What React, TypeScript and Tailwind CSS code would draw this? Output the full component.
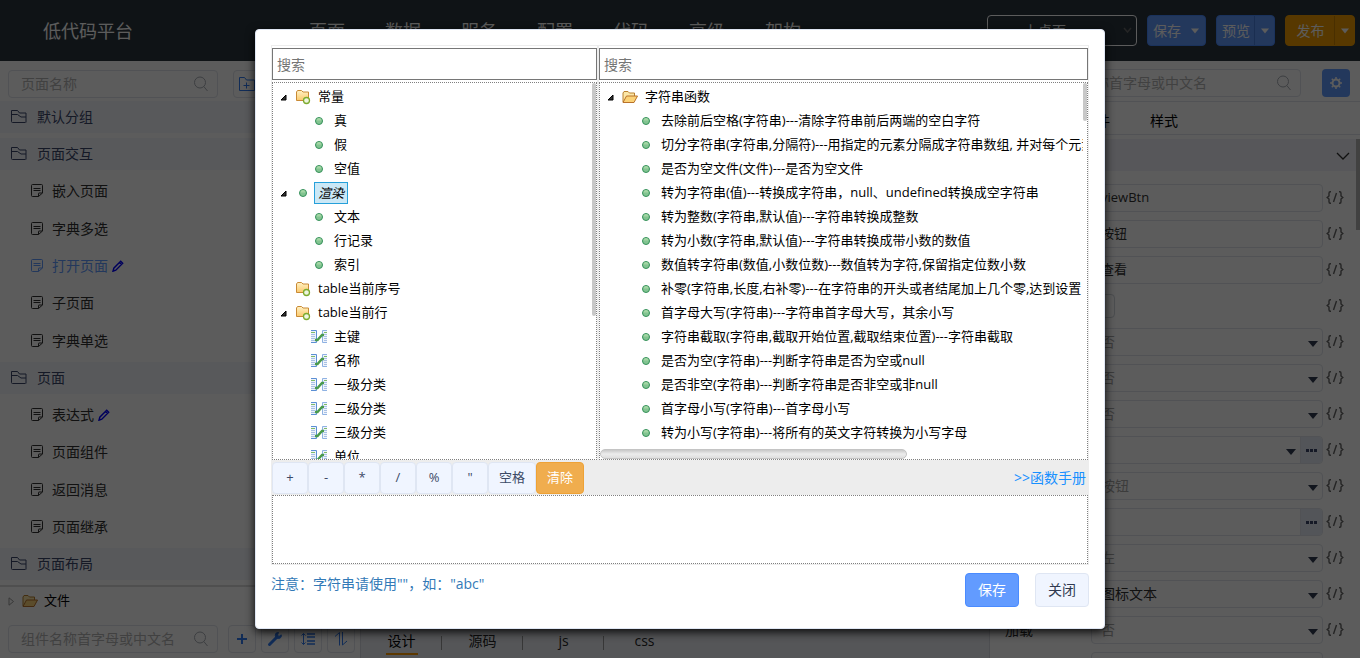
import React from "react";

function Triangle({ className = "" }: { className?: string }) {
  return (
    <svg className={`shrink-0 ${className}`} width="10" height="6" viewBox="0 0 10 6" fill="currentColor" aria-hidden="true">
      <path d="M0 0h10L5 6z" />
    </svg>
  );
}

function SearchIcon() {
  return (
    <svg className="shrink-0 text-[#a9adb5]" width="16" height="16" viewBox="0 0 16 16" fill="none" stroke="currentColor" aria-hidden="true">
      <circle cx="7" cy="6.5" r="5.5" />
      <path d="M10.8 10.5L14.5 15" />
    </svg>
  );
}

function OutlineFolder() {
  return (
    <svg className="shrink-0" width="18" height="14" viewBox="0 0 18 14" fill="none" stroke="currentColor" aria-hidden="true">
      <path d="M15.5 12.5h-13a1 1 0 0 1-1-1V.5h6l2 2.5h6.5v9.5M1.5 4.5h6l3.5 2.5h5" />
    </svg>
  );
}

function PageIcon() {
  return (
    <svg className="shrink-0" width="14" height="14" viewBox="0 0 14 14" fill="none" stroke="currentColor" aria-hidden="true">
      <path d="M12.5 9V1.5a1 1 0 0 0-1-1h-9a1 1 0 0 0-1 1v10a1 1 0 0 0 1 1H8.5zM8.5 12.5V9.500a.5.5 0 0 1 .5-.5h3.5M3.5 4.5h7M3.5 6.5h7" />
    </svg>
  );
}

function EditPen() {
  return (
    <svg className="shrink-0 text-[#0000ff]" width="12" height="12" viewBox="0 0 12 12" fill="none" stroke="currentColor" strokeWidth="1.4" aria-hidden="true">
      <path d="M1 11.200l.8-3L8.700 1.300l2 2L3.800 10.200zM7.500 2.500l2 2" />
    </svg>
  );
}

function OpenFolder() {
  return (
    <svg className="shrink-0" width="16" height="16" viewBox="0 0 16 16" aria-hidden="true">
      <path d="M1 13V4l1-1.500h4L7.500 4h5v3" fill="#fbe7a8" stroke="#b9802f" />
      <path d="M1 13.500L4.500 7h11L12 13.500z" fill="#fbd277" stroke="#b9722a" />
    </svg>
  );
}

function ClosedFolder() {
  return (
    <svg className="shrink-0" width="16" height="16" viewBox="0 0 16 16" aria-hidden="true">
      <defs>
        <linearGradient id="folderFill" x1="0" y1="0" x2="0" y2="1">
          <stop offset="0" stopColor="#fff2c4" />
          <stop offset="1" stopColor="#fbc96d" />
        </linearGradient>
      </defs>
      <path d="M1.500 11V3l1-1.500h4L8 3h5.500v8.500h-12z" fill="url(#folderFill)" stroke="#c98a35" />
      <circle cx="11.500" cy="11.500" r="3" fill="#eef5df" stroke="#7dab2f" strokeWidth="1.300" />
    </svg>
  );
}

function Dot() {
  return (
    <svg className="shrink-0" width="16" height="16" viewBox="0 0 16 16" aria-hidden="true">
      <circle cx="8" cy="8" r="3.500" fill="#82c491" stroke="#35915a" />
      <path d="M5.500 7.500a2.500 2.500 0 0 1 5 0z" fill="#a3d6a4" />
    </svg>
  );
}

function FieldIcon() {
  return (
    <svg className="shrink-0" width="16" height="16" viewBox="0 0 16 16" aria-hidden="true">
      <path d="M0 1.500h5.500v12H0" fill="#eef3fb" stroke="#5b8fd4" />
      <path d="M16 1.500h-4.500v12H16" fill="#eef3fb" stroke="#8fb2e3" />
      <path d="M0 5.500h4M0 7.500h4M0 9.500h4M0 11.500h4M13 5.500h3M13 7.500h3M13 9.500h3M13 11.500h3" stroke="#a9c1e4" />
      <path d="M0 3.500h4M13 3.500h3" stroke="#7dbb6a" />
      <path d="M4 11h2.500L11 6h2" fill="none" stroke="#4a9a4c" strokeWidth="2.400" />
    </svg>
  );
}

function Expander({ show }: { show: boolean }) {
  return (
    <span className="flex w-4 shrink-0 justify-start pl-[3px]">
      {show && (
        <svg width="7" height="7" viewBox="0 0 7 7" aria-hidden="true">
          <path d="M6 1v5H1z" fill="#333" stroke="#000" />
        </svg>
      )}
    </span>
  );
}

type Kind = "folder" | "open" | "dot" | "field";
type Node = { label: string; kind: Kind; level: number; open?: boolean; selected?: boolean };

const values: Node[] = [
  { label: "常量", kind: "folder", level: 0, open: true },
  { label: "真", kind: "dot", level: 1 },
  { label: "假", kind: "dot", level: 1 },
  { label: "空值", kind: "dot", level: 1 },
  { label: "渲染", kind: "dot", level: 0, open: true, selected: true },
  { label: "文本", kind: "dot", level: 1 },
  { label: "行记录", kind: "dot", level: 1 },
  { label: "索引", kind: "dot", level: 1 },
  { label: "table当前序号", kind: "folder", level: 0 },
  { label: "table当前行", kind: "folder", level: 0, open: true },
  { label: "主键", kind: "field", level: 1 },
  { label: "名称", kind: "field", level: 1 },
  { label: "一级分类", kind: "field", level: 1 },
  { label: "二级分类", kind: "field", level: 1 },
  { label: "三级分类", kind: "field", level: 1 },
  { label: "单位", kind: "field", level: 1 },
];

const functions: Node[] = [
  { label: "字符串函数", kind: "open", level: 0, open: true },
  ...[
    "去除前后空格(字符串)---清除字符串前后两端的空白字符",
    "切分字符串(字符串,分隔符)---用指定的元素分隔成字符串数组, 并对每个元素",
    "是否为空文件(文件)---是否为空文件",
    "转为字符串(值)---转换成字符串，null、undefined转换成空字符串",
    "转为整数(字符串,默认值)---字符串转换成整数",
    "转为小数(字符串,默认值)---字符串转换成带小数的数值",
    "数值转字符串(数值,小数位数)---数值转为字符,保留指定位数小数",
    "补零(字符串,长度,右补零)---在字符串的开头或者结尾加上几个零,达到设置",
    "首字母大写(字符串)---字符串首字母大写，其余小写",
    "字符串截取(字符串,截取开始位置,截取结束位置)---字符串截取",
    "是否为空(字符串)---判断字符串是否为空或null",
    "是否非空(字符串)---判断字符串是否非空或非null",
    "首字母小写(字符串)---首字母小写",
    "转为小写(字符串)---将所有的英文字符转换为小写字母",
  ].map((label): Node => ({ label, kind: "dot", level: 1 })),
];

function NodeIcon({ kind }: { kind: Kind }) {
  if (kind === "folder") return <ClosedFolder />;
  if (kind === "open") return <OpenFolder />;
  if (kind === "field") return <FieldIcon />;
  return <Dot />;
}

function Tree({ nodes, label }: { nodes: Node[]; label: string }) {
  return (
    <ul role="tree" aria-label={label} className="pt-0.5 pl-1 text-[13px] text-black">
      {nodes.map((n) => (
        <li key={n.label} role="treeitem" aria-selected={!!n.selected} className={`flex h-6 items-center whitespace-nowrap ${n.level ? "pl-4" : ""}`}>
          <Expander show={!!n.open} />
          <span className="ml-0.5 flex"><NodeIcon kind={n.kind} /></span>
          <span className={n.selected ? "ml-[3px] border border-[#26a0da] bg-[#cbe8f6] px-[3px] leading-5 italic" : "ml-[7px]"}>{n.label}</span>
        </li>
      ))}
    </ul>
  );
}

function SplitButton({ label, tone }: { label: string; tone: "blue" | "blueSplit" | "orange" }) {
  const box =
    tone === "orange"
      ? "w-[70px] border-[#f09c00] bg-[#f09c00]"
      : "w-[59px] border-[#4a8bff] bg-[#629bff]";
  return (
    <button type="button" className={`flex h-[31px] rounded-sm border text-sm text-white ${box}`}>
      <span className="flex h-full flex-1 items-center justify-center pl-px">{label}</span>
      <span className={`flex h-full w-5 items-center justify-center ${tone === "blue" ? "" : tone === "orange" ? "border-l border-[#c98200]" : "border-l border-[#4a80e0]"}`}>
        <Triangle className="h-[6px] w-2" />
      </span>
    </button>
  );
}

type PageRow = { label: string; group?: boolean; active?: boolean; edited?: boolean };

const pages: PageRow[] = [
  { label: "默认分组", group: true },
  { label: "页面交互", group: true },
  { label: "嵌入页面" },
  { label: "字典多选" },
  { label: "打开页面", active: true, edited: true },
  { label: "子页面" },
  { label: "字典单选" },
  { label: "页面", group: true },
  { label: "表达式", edited: true },
  { label: "页面组件" },
  { label: "返回消息" },
  { label: "页面继承" },
  { label: "页面布局", group: true },
];

function SearchField({ placeholder, className }: { placeholder: string; className: string }) {
  return (
    <label className={`flex h-7 items-center rounded-sm border border-[#dfe3ea] pr-2 pl-3 ${className}`}>
      <input aria-label={placeholder} placeholder={placeholder} className="min-w-0 flex-1 bg-transparent text-sm outline-none placeholder:text-[#b4b4b4]" />
      <SearchIcon />
    </label>
  );
}

function IconButton({ label, children }: { label: string; children: React.ReactNode }) {
  return (
    <button type="button" aria-label={label} className="flex h-7 w-7 shrink-0 items-center justify-center rounded-sm border border-[#dfe3ea] text-[#2f7bf0]">
      {children}
    </button>
  );
}

function LeftPanel() {
  return (
    <aside className="flex w-[361px] shrink-0 flex-col border-r border-[#d5d9e0] bg-white">
      <div className="flex h-[37px] items-end gap-[15px] pl-2">
        <SearchField placeholder="页面名称" className="w-[210px]" />
        <IconButton label="新建分组">
          <svg width="18" height="16" viewBox="0 0 18 16" fill="none" stroke="currentColor" aria-hidden="true">
            <path d="M16.500 14.500h-15V1.500h5l2 2.500h8zM8.500 6.500v6M5.500 9.500h6" />
          </svg>
        </IconButton>
      </div>
      <ul className="flex flex-1 flex-col">
        {pages.map((p) => (
          <li key={p.label} className="flex flex-1 items-center">
            {p.group ? (
              <button type="button" className="flex h-8 w-full items-center gap-[9px] bg-[#f3f7fd] pl-2.5 text-sm text-[#3a466a]">
                <OutlineFolder />
                {p.label}
              </button>
            ) : (
              <button type="button" className={`flex w-full items-center gap-2 pl-[30px] text-sm ${p.active ? "text-[#629bff]" : "text-[#303030]"}`}>
                <PageIcon />
                <span className="flex items-center gap-1">
                  {p.label}
                  {p.edited && <EditPen />}
                </span>
              </button>
            )}
          </li>
        ))}
      </ul>
      <div className="mt-0.5 border-t-2 border-[#dcdcdc]">
        <div className="flex h-7 items-center pl-2 text-[13px] text-black">
          <svg width="7" height="9" viewBox="0 0 7 9" fill="none" stroke="#999" aria-hidden="true">
            <path d="M1 .8v7.400l4.500-3.700z" />
          </svg>
          <span className="mr-1.5 ml-[7px] flex"><OpenFolder /></span>
          文件
        </div>
        <div className="flex h-[43px] items-center gap-[5px] pt-1 pl-2">
          <SearchField placeholder="组件名称首字母或中文名" className="mr-[5px] w-[210px]" />
          <IconButton label="添加">
            <svg width="12" height="12" viewBox="0 0 12 12" stroke="currentColor" strokeWidth="2" aria-hidden="true">
              <path d="M1 6h10M6 1v10" />
            </svg>
          </IconButton>
          <IconButton label="设置">
            <svg width="16" height="16" viewBox="0 0 16 16" fill="none" stroke="currentColor" aria-hidden="true">
              <path d="M2.500 13.500L9.500 6.500" strokeWidth="3" strokeLinecap="round" />
              <path d="M14.200 3.800A3 3 0 1 1 11.500 1.500L10.500 4l1.500 1.500z" fill="currentColor" strokeWidth="1" />
            </svg>
          </IconButton>
          <IconButton label="行距">
            <svg width="16" height="14" viewBox="0 0 16 14" fill="none" stroke="currentColor" aria-hidden="true">
              <path d="M3.500 1.500v11M1.500 3.500l2-2 2 2M1.500 10.500l2 2 2-2" />
              <path d="M7 2h8M7 5h8M7 9h8M7 12h8" strokeWidth="1.500" />
            </svg>
          </IconButton>
          <IconButton label="排序">
            <svg width="14" height="14" viewBox="0 0 14 14" fill="none" stroke="currentColor" aria-hidden="true">
              <path d="M1 4.500L5.500.5V13.500M8.500 0v13L13 9" />
            </svg>
          </IconButton>
        </div>
      </div>
    </aside>
  );
}

function Center() {
  return (
    <main className="flex min-w-0 flex-1 flex-col justify-end bg-[#eaedf3]">
      <nav className="flex h-8 text-sm text-[#262626]">
        {["设计", "源码", "js", "css"].map((t, i) => (
          <div key={t} className="grid w-[81px] grid-cols-[1fr_32px_1fr] items-start">
            <button type="button" className={`col-start-2 flex h-[29px] items-center justify-center border-b-2 pt-0.5 whitespace-nowrap ${i === 0 ? "border-[#ff9c00] text-black" : "border-transparent"}`}>
              {t}
            </button>
            {i < 3 && <span className="mt-2.5 h-3.5 w-px justify-self-end bg-[#9a9a9a]" />}
          </div>
        ))}
      </nav>
    </main>
  );
}

type Prop = { label: string; kind: "text" | "select" | "check" | "more" | "selectMore"; value?: string; muted?: boolean };

const props: Prop[] = [
  { label: "", kind: "text", value: "viewBtn" },
  { label: "", kind: "text", value: "按钮" },
  { label: "", kind: "text", value: "查看" },
  { label: "", kind: "check" },
  { label: "", kind: "select", value: "否", muted: true },
  { label: "", kind: "select", value: "否", muted: true },
  { label: "", kind: "select", value: "否", muted: true },
  { label: "", kind: "selectMore", value: "" },
  { label: "", kind: "select", value: "按钮", muted: true },
  { label: "", kind: "more", value: "" },
  { label: "", kind: "select", value: "左", muted: true },
  { label: "", kind: "select", value: "图标文本" },
  { label: "加载", kind: "select", value: "否", muted: true },
  { label: "", kind: "text", value: "" },
];

function PropRow({ p, index }: { p: Prop; index: number }) {
  const id = `prop-${index}`;
  const isSelect = p.kind === "select" || p.kind === "selectMore";
  const hasMore = p.kind === "more" || p.kind === "selectMore";
  return (
    <div className="flex h-9 shrink-0 items-center">
      <label htmlFor={id} className="w-[101px] shrink-0 pl-[15px] text-sm text-[#303030]">{p.label}</label>
      {p.kind === "check" ? (
        <div className="flex flex-1"><input id={id} aria-label="启用" type="checkbox" className="h-6 w-6 appearance-none rounded-sm border border-[#d0d4da]" /></div>
      ) : (
        <div className="flex h-7 flex-1 overflow-hidden rounded-sm border border-[#dfe3ea]">
          <div className="grid min-w-0 flex-1 items-center">
            {isSelect ? (
              <select id={id} aria-label={p.label || "属性"} className={`col-start-1 row-start-1 w-full appearance-none bg-transparent pl-[9px] text-sm ${p.muted ? "text-[#a6a6a6]" : "text-[#303030]"}`}>
                <option>{p.value}</option>
              </select>
            ) : (
              <input id={id} aria-label={p.label || "属性"} defaultValue={p.value} className="w-full bg-transparent pl-[9px] text-[13px] text-[#303030]" />
            )}
            {isSelect && <Triangle className="pointer-events-none col-start-1 row-start-1 mt-1 mr-1 justify-self-end text-[#303a50]" />}
          </div>
          {hasMore && (
            <button type="button" aria-label="更多" className="flex w-[22px] items-center justify-center gap-px border-l border-[#dfe3ea] bg-[#e6ebf5]">
              <i className="h-[3px] w-[3px] bg-[#3a466a]" />
              <i className="h-[3px] w-[3px] bg-[#3a466a]" />
              <i className="h-[3px] w-[3px] bg-[#3a466a]" />
            </button>
          )}
        </div>
      )}
      <span className="w-[33px] shrink-0 pb-0.5 pl-[3px] text-[#666]">
        <svg width="18" height="13" viewBox="0 0 18 13" fill="none" stroke="currentColor" strokeWidth="1.400" aria-hidden="true">
          <path d="M5 .7H4.200Q3 .7 3 2.200V5L1.200 6.500 3 8v2.800q0 1.500 1.200 1.500H5M13 .7h.8q1.200 0 1.200 1.500V5l1.800 1.500L15 8v2.800q0 1.500-1.200 1.500H13M10.500 2L7.500 11" />
        </svg>
      </span>
    </div>
  );
}

function RightPanel() {
  return (
    <aside className="flex w-[371px] shrink-0 flex-col overflow-hidden border-l border-[#d5d9e0] bg-white">
      <div className="flex h-[41px] shrink-0 items-center justify-end gap-[21px] border-b border-[#dfe3ea] pt-1 pr-2.5">
        <SearchField placeholder="组件名称首字母或中文名" className="w-[261px]" />
        <button type="button" aria-label="设置" className="flex h-7 w-7 items-center justify-center rounded-sm bg-[#629bff] text-white">
          <svg width="12" height="12" viewBox="0 0 12 12" fill="none" stroke="currentColor" strokeWidth="2" aria-hidden="true">
            <circle cx="6" cy="6" r="3.500" />
            <path d="M6 0v2M6 10v2M0 6h2M10 6h2M1.800 1.800l1.200 1.200M9 9l1.200 1.200M10.200 1.800L9 3M3 9l-1.200 1.200" strokeWidth="1.500" />
          </svg>
        </button>
      </div>
      <div className="flex h-[33px] shrink-0 items-center gap-10 border-b border-[#dfe3ea] pt-1.5 pl-[106px] text-sm text-black">
        <button type="button">件</button>
        <button type="button">样式</button>
      </div>
      <div className="mt-1 flex min-h-0 flex-1">
        <div className="flex min-w-0 flex-1 flex-col overflow-hidden">
          <div className="flex h-8 shrink-0 items-center justify-end bg-[#f0f2f8] pt-0.5 pr-1.5">
            <svg width="14" height="8" viewBox="0 0 14 8" fill="none" stroke="#303030" strokeWidth="1.300" aria-hidden="true">
              <path d="M1 1l6 6 6-6" />
            </svg>
          </div>
          <div className="flex flex-col pt-[9px]">
            {props.map((p, i) => <PropRow key={i} p={p} index={i} />)}
          </div>
        </div>
        <div className="w-1"><div className="h-[91px] bg-[#b5b5b5]" /></div>
      </div>
    </aside>
  );
}

function Dialog() {
  const ops = ["+", "-", "*", "/", "%", '"'];
  return (
    <section role="dialog" aria-label="表达式" className="flex h-[600px] w-[850px] flex-col rounded border border-[#dfe6f3] bg-white px-[15px] pt-[15px] pb-[21px] shadow-[0_3px_10px_rgba(0,0,0,0.9)]">
      <div className="flex min-h-0 flex-1 flex-col bg-[#ededed] p-px">
        <div className="flex min-h-0 flex-1 gap-0.5">
          {[
            { nodes: values, name: "数据", width: "w-[325px]" },
            { nodes: functions, name: "函数", width: "min-w-0 flex-1" },
          ].map((c, i) => (
            <div key={c.name} className={`flex flex-col bg-white pt-0.5 ${c.width}`}>
              <input aria-label={`搜索${c.name}`} placeholder="搜索" className="h-8 border border-[#767676] bg-white px-1 text-sm outline-none placeholder:text-[#757575]" />
              <div className="mt-0.5 flex min-h-0 flex-1 border border-dotted border-[#808080]">
                <div className="flex min-w-0 flex-1 flex-col overflow-hidden">
                  <div className="min-h-0 flex-1 overflow-hidden">
                    <Tree nodes={c.nodes} label={c.name} />
                  </div>
                  {i === 1 && <div className="h-2.5 w-[307px] rounded-full border border-[#c4c4c4] bg-linear-to-b from-[#c8c8c8] via-[#ececec] to-[#dedede]" />}
                </div>
                <div className="w-1">
                  <div className={`rounded-full bg-[#c8c8c8] ${i === 0 ? "h-[233px]" : "h-[38px]"}`} />
                </div>
              </div>
            </div>
          ))}
        </div>
        <div className="flex h-[35px] items-center text-[13px] text-[#3c4a66]">
          {ops.map((o) => (
            <button key={o} type="button" className="h-8 w-9 rounded-sm border border-[#dfe6f3] bg-[#f0f5ff]">{o}</button>
          ))}
          <button type="button" className="h-8 w-12 rounded-sm border border-[#dfe6f3] bg-[#f0f5ff]">空格</button>
          <button type="button" className="h-8 w-12 rounded-sm border border-[#eea236] bg-[#f0ad4e] text-white">清除</button>
          <a href="#manual" className="mr-0.5 ml-auto text-sm text-[#1890ff]">&gt;&gt;函数手册</a>
        </div>
        <textarea aria-label="表达式" className="h-[69px] resize-none border border-dotted border-[#808080] bg-white outline-none" />
      </div>
      <div className="flex h-[42px] shrink-0 items-end">
        <p className="mb-[13px] flex-1 text-sm text-[#337ab7]">注意：字符串请使用""，如："abc"</p>
        <div className="flex gap-4 text-sm">
          <button type="button" className="h-[34px] w-[54px] rounded-sm border border-[#4a8bff] bg-[#629bff] text-white">保存</button>
          <button type="button" className="h-[34px] w-[54px] rounded-sm border border-[#dfe6f3] bg-[#f0f5ff] text-[#303a50]">关闭</button>
        </div>
      </div>
    </section>
  );
}

export default function App() {
  return (
    <div className="relative flex h-screen flex-col overflow-hidden bg-white font-['Open_Sans','Noto_Sans_CJK_SC',sans-serif]">
      <header className="flex h-[61px] shrink-0 items-center bg-[#2a353d] pr-[5px] pl-[43px] text-lg text-white">
        <h1 className="mr-[176px]">低代码平台</h1>
        <nav className="flex flex-1 gap-10">
          {["页面", "数据", "服务", "配置", "代码", "高级", "架构"].map((t) => (
            <a key={t} href="#nav">{t}</a>
          ))}
        </nav>
        <div className="flex items-center gap-2.5">
          <div className="grid h-[31px] w-[150px] items-center rounded-sm border border-white">
            <select aria-label="桌面" className="col-start-1 row-start-1 w-full appearance-none bg-transparent pl-9 text-sm outline-none">
              <option>上桌面</option>
            </select>
            <svg className="pointer-events-none col-start-1 row-start-1 mr-1 justify-self-end" width="9" height="7" viewBox="0 0 9 7" fill="none" stroke="#666" strokeWidth="1.500" aria-hidden="true">
              <path d="M1 1l3.500 4L8 1" />
            </svg>
          </div>
          <SplitButton label="保存" tone="blue" />
          <SplitButton label="预览" tone="blueSplit" />
          <SplitButton label="发布" tone="orange" />
        </div>
      </header>
      <div className="flex min-h-0 flex-1">
        <LeftPanel />
        <Center />
        <RightPanel />
      </div>
      <div className="absolute inset-0 flex items-center justify-center bg-black/64">
        <Dialog />
      </div>
    </div>
  );
}
